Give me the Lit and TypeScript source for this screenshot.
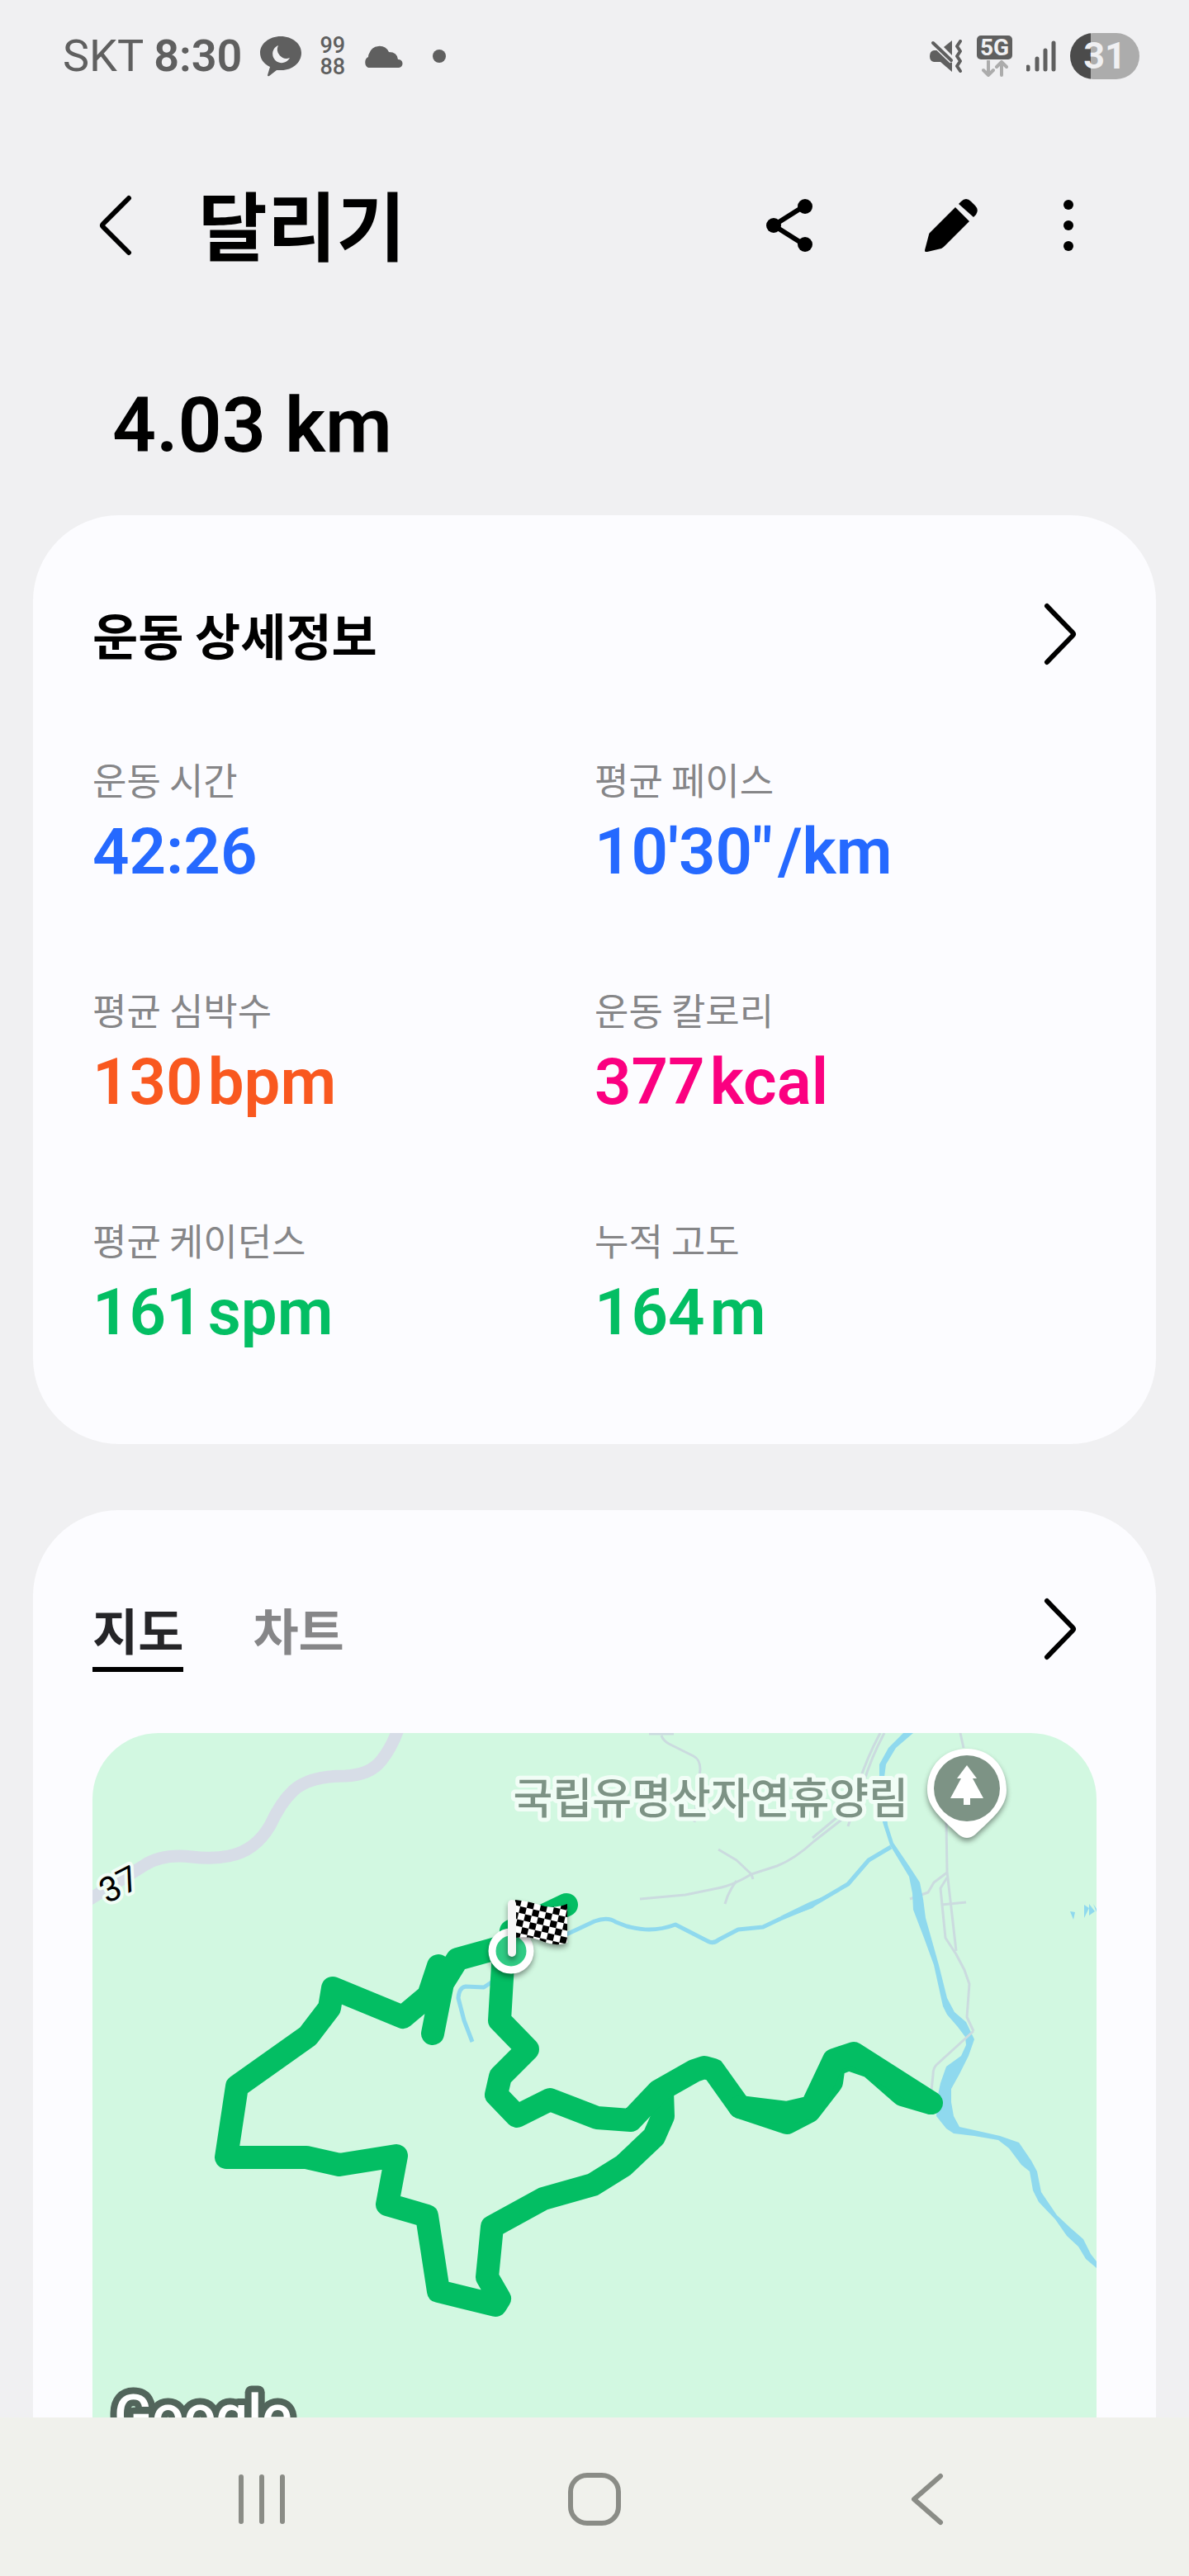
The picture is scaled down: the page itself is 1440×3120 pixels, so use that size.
import { LitElement, html, css, svg } from "lit";
import { customElement, property, state } from "lit/decorators.js";
import { classMap } from "lit/directives/class-map.js";

const chevron = html`
  <svg width="40" height="76" viewBox="0 0 40 76" fill="none" stroke="currentColor" stroke-width="6" stroke-linecap="round" stroke-linejoin="round">
    <path d="M4 4 L35 36 Q37 38 35 40 L4 72" />
  </svg>
`;

@customElement("status-bar")
export class StatusBar extends LitElement {
  static styles = css`
    :host {
      display: flex;
      justify-content: space-between;
      align-items: center;
      height: 136px;
      padding: 0 60px 0 76px;
      color: #5f5f5f;
      font-family: Roboto, "Noto Sans CJK KR", sans-serif;
      font-size: 54px;
      line-height: 64px;
    }
    .side {
      display: flex;
      align-items: center;
      gap: 22px;
    }
    .system {
      gap: 17px;
    }
    .clock {
      display: flex;
      gap: 12px;
    }
    .time {
      font-weight: 600;
    }
    .badge {
      display: flex;
      flex-direction: column;
      font-size: 27px;
      font-weight: 500;
      line-height: 26px;
    }
    .net {
      display: flex;
      flex-direction: column;
      align-items: center;
      gap: 1px;
    }
    .net-name {
      width: 43px;
      border-radius: 5px;
      background: #5f5f5f;
      color: #f0f0f2;
      font-size: 28px;
      font-weight: 700;
      line-height: 29px;
      text-align: center;
    }
    .battery {
      width: 84px;
      border-radius: 28px;
      background: linear-gradient(to right, #4b4b4b 30%, #acacac 30%);
      color: #f0f0f2;
      font-size: 45px;
      font-weight: 700;
      line-height: 56px;
      text-align: center;
    }
    svg {
      display: block;
    }
  `;

  render() {
    return html`
      <div class="side">
        <div class="clock"><span>SKT</span><span class="time">8:30</span></div>
        <svg width="50" height="50" viewBox="0 0 50 50" fill="currentColor">
          <path fill-rule="evenodd" d="M25 1 C39 1 50 10 50 21 C50 33 39 42 26 42 L20 42 L11 49 Q9 50 9 48 L12 38 C4 34 0 28 0 21 C0 10 11 1 25 1 Z M22 12 A11 11 0 1 0 36 27 A11 11 0 0 1 22 12 Z" />
        </svg>
        <div class="badge"><span>99</span><span>88</span></div>
        <svg width="48" height="28" viewBox="0 0 48 28" fill="currentColor">
          <path d="M6 28 A6 7 0 0 1 6 15 Q6 12 7 11 A13 13 0 0 1 31 9 Q41 9 42 18 A5 5 0 0 1 43 28 Z" />
        </svg>
        <svg width="48" height="16" viewBox="0 0 48 16" fill="currentColor">
          <circle cx="22" cy="8" r="8" />
        </svg>
      </div>
      <div class="side system">
        <svg width="40" height="40" viewBox="0 0 40 40" fill="currentColor">
          <path d="M27 1 V19 L17 9 Z" />
          <path d="M5 13 H11 L27 28 V39 L13 27 H5 Q0 26 0 20 Q0 14 5 13 Z" />
          <path d="M3 3 L27 26" stroke="#f0f0f2" stroke-width="7" />
          <path d="M4 4 L26 25" stroke="currentColor" stroke-width="4" stroke-linecap="round" />
          <path d="M37 2 L33 8 L37 14 L33 20 L37 26 L33 32 L37 38" fill="none" stroke="currentColor" stroke-width="4" stroke-linecap="round" stroke-linejoin="round" />
        </svg>
        <div class="net">
          <span class="net-name">5G</span>
          <svg width="32" height="20" viewBox="0 0 32 20" fill="none" stroke="#acacac" stroke-width="4" stroke-linecap="round">
            <path d="M8 1 V17 M2 12 L8 18 L14 12 M24 18 V2 M18 8 L24 2 L30 8" />
          </svg>
        </div>
        <svg width="36" height="40" viewBox="0 0 36 40" stroke="currentColor" stroke-width="5" stroke-linecap="round">
          <path d="M2 33 V36 M13 23 V36 M23 13 V36 M33 4 V36" />
        </svg>
        <div class="battery">31</div>
      </div>
    `;
  }
}

@customElement("stat-item")
export class StatItem extends LitElement {
  static styles = css`
    :host {
      display: block;
    }
    .label {
      font-family: "Noto Sans CJK KR", sans-serif;
      font-size: 45px;
      line-height: 64px;
      color: #868688;
    }
    .value {
      margin-top: 12px;
      font-family: Roboto, sans-serif;
      font-size: 78px;
      font-weight: 600;
      line-height: 88px;
      white-space: nowrap;
    }
    .unit {
      margin-left: 6px;
    }
    .blue {
      color: #2569ff;
    }
    .orange {
      color: #f9581f;
    }
    .pink {
      color: #fb0080;
    }
    .green {
      color: #03be63;
    }
  `;

  @property() label = "";
  @property() value = "";
  @property() unit = "";
  @property() tone = "blue";

  render() {
    return html`
      <div class="label">${this.label}</div>
      <div class="value ${this.tone}">${this.value}${this.unit ? html`<span class="unit">${this.unit}</span>` : ""}</div>
    `;
  }
}

@customElement("route-map")
export class RouteMap extends LitElement {
  static styles = css`
    :host {
      display: block;
      overflow: hidden;
      border-radius: 80px 80px 0 0;
      background: #d2f8e1;
    }
    svg {
      display: block;
      width: 100%;
      height: auto;
    }
    .highway {
      stroke: #d7dde7;
      stroke-width: 15;
    }
    .road {
      stroke: #cbdbdf;
      stroke-width: 3;
    }
    .water {
      fill: #8fd9ee;
    }
    .stream {
      stroke: #8fd9ee;
      stroke-width: 5;
    }
    .route {
      stroke: #03be63;
      stroke-width: 28;
      stroke-linecap: round;
    }
    .place {
      font-family: "Noto Sans CJK KR", sans-serif;
      font-size: 52px;
      font-weight: 500;
      fill: #7d9385;
      stroke: #f1fdf6;
      stroke-width: 10;
      paint-order: stroke;
    }
    .road-no {
      font-family: Roboto, sans-serif;
      font-size: 42px;
      fill: #000;
      stroke: #f1fdf6;
      stroke-width: 8;
      paint-order: stroke;
    }
    .google {
      font-family: Roboto, sans-serif;
      font-size: 68px;
      font-weight: 500;
      fill: #fff;
      stroke: #52655b;
      stroke-width: 16;
      paint-order: stroke;
    }
    .shadow {
      filter: drop-shadow(0 4px 3px rgba(0, 0, 0, 0.4));
    }
  `;

  roads() {
    return svg`
      <path class="highway" d="M370 -4 Q362 18 350 33 Q336 51 306 52 Q262 52 243 70 Q228 84 215 112 Q197 143 165 149 Q145 153 120 150 Q85 146 63 160 L-6 203" />
      <g class="road">
        <path d="M674 1 H704 M689 3 Q691 9 698 13 L728 28 Q736 32 736 44 L729 108" />
        <path d="M954 0 Q938 30 929 58 L902 102 L872 127" />
        <path d="M959 0 Q943 30 934 60 L906 106 L874 131 Q850 153 829 161 L798 171 Q775 185 757 188 L718 196 L663 201" />
        <path d="M758 141 L780 154 L798 171 L800 177 M780 179 Q770 192 766 207 M915 113 L918 104" />
        <path d="M1051 0 L1055 18 M1034 108 L1035 168 L1041 220 L1046 264" />
        <path d="M1035 169 L1019 181 L1012 193 L990 201" />
        <path d="M1035 175 L1027 188 L1033 248 L1046 268 L1056 287 L1062 304 L1059 344 L1067 361" />
        <path d="M1028 208 L1058 205" />
      </g>
    `;
  }

  water() {
    return svg`
      <path class="water" d="M982 0 L964 18 L953 38 L953 61 L957 108 L966 136 L989 174 L993 194 L994 214 L1007 248 L1019 281 L1030 331 L1035 341 L1048 356 L1057 368 L1058 378 L1052 391 L1034 404 L1027 424 L1024 438 L1022 464 L1034 479 L1043 485 L1068 488 L1097 493 L1110 503 L1125 523 L1135 531 L1139 554 L1146 568 L1166 589 L1180 609 L1194 622 L1203 637 L1216 648 V640 L1209 631 L1200 613 L1184 599 L1168 584 L1149 556 L1144 531 L1137 518 L1122 496 L1099 488 L1077 483 L1050 477 L1043 464 L1040 447 V431 L1050 413 L1061 391 L1068 371 L1058 350 L1044 338 L1035 321 L1025 281 L1009 224 L1006 201 L1002 181 L989 161 L970 133 L963 111 L958 61 L961 38 L973 18 L994 0 Z" />
      <path class="stream" d="M560 250 L576 243 L608 228 Q624 222 634 229 L647 234 Q664 238 674 238 Q690 238 706 232 L745 252 Q752 256 759 250 L782 238 L812 235 L833 225 L869 210 L915 183 L940 154 L967 138" />
      <path class="water" d="M833 222 L868 205 L888 197 L872 212 L850 220 Z" />
      <path class="stream" d="M486 300 L474 308 L452 307 Q444 308 443 321 L450 348 L460 374" />
      <path class="water" d="M1184 216 L1190 217 L1188 226 Z M1201 208 L1207 212 L1201 224 Z M1207 207 L1214 216 L1207 221 Z M1212 207 L1216 213 V217 Z" />
      <path class="road" d="M1067 361 L1022 402 Q1018 406 1018 414 L1016 433" />
    `;
  }

  route() {
    return svg`
      <g class="route">
        <path d="M574 208 L507 240 M507 256 L442 274 L424 303 L412 364 M419 282 L407 318 L376 344 L291 309 L287 333 L261 367 L175 428 L162 514 H259 L299 523 L368 512 L357 571 L405 585 L419 676 L488 693 L493 685 L478 659 L484 598 L546 564 L606 547 L643 524 L680 489 L691 464 L690 434" />
        <path d="M498 264 L493 348 L527 383 L494 416 L489 438 L514 464 L554 444 L611 466 L652 469 L685 434 L729 409 L741 405 L752 408 L784 453 L841 472 L868 458 L895 423 L898 402 L916 395 L942 404 L981 438 L1015 448" />
        <path d="M784 453 L841 460 L871 453 L898 396 L922 388 L1016 448" />
      </g>
    `;
  }

  markers() {
    return svg`
      <defs>
        <pattern id="checker" width="16" height="16" patternUnits="userSpaceOnUse" patternTransform="rotate(13)">
          <rect width="16" height="16" fill="#fff" />
          <path d="M0 0 H8 V8 H0 Z M8 8 H16 V16 H8 Z" fill="#000" />
        </pattern>
      </defs>
      <g class="shadow">
        <circle cx="507" cy="264" r="23" fill="#30cb84" stroke="#fff" stroke-width="9" />
      </g>
      <g class="shadow">
        <path d="M512 202 Q530 204 541 208 Q556 214 575 207 V254 Q562 259 547 253 Q530 245 512 248 Z" fill="url(#checker)" />
        <rect x="503" y="202" width="10" height="69" rx="5" fill="#f6f6f6" />
      </g>
      <g class="shadow">
        <path d="M1059 19 C1087 19 1107 40 1107 69 C1107 90 1090 103 1069 123 Q1059 131 1049 123 C1028 103 1011 90 1011 69 C1011 40 1031 19 1059 19 Z" fill="#fff" />
      </g>
      <circle cx="1059" cy="67" r="40" fill="#7d9385" />
      <path d="M1059 39 L1071 55 H1066 L1079 79 H1063 V87 H1055 V79 H1039 L1052 55 H1047 Z" fill="#fff" />
    `;
  }

  render() {
    return html`
      <svg viewBox="0 0 1216 829" fill="none" stroke-linejoin="round">
        ${this.roads()} ${this.water()}
        <text class="place" x="988" y="98" text-anchor="end">국립유명산자연휴양림</text>
        <text class="road-no" x="32" y="198" text-anchor="middle" transform="rotate(-27 32 183)">37</text>
        ${this.route()} ${this.markers()}
        <text class="google" x="26" y="850">Google</text>
      </svg>
    `;
  }
}

@customElement("app-root")
export class AppRoot extends LitElement {
  static styles = css`
    :host {
      display: flex;
      flex-direction: column;
      min-height: 100vh;
      background: #f0f0f2;
      color: #000;
      font-family: "Noto Sans CJK KR", sans-serif;
    }
    h1,
    h2 {
      margin: 0;
      font-weight: 700;
    }
    button {
      display: flex;
      justify-content: center;
      align-items: center;
      padding: 0;
      border: 0;
      background: none;
      color: inherit;
      font: inherit;
      cursor: pointer;
    }
    svg {
      display: block;
    }
    .toolbar {
      display: flex;
      align-items: center;
      height: 274px;
      padding: 0 102px 0 80px;
    }
    .back {
      width: 120px;
      height: 120px;
    }
    .title {
      flex: 1;
      margin-left: 40px;
      padding-bottom: 8px;
      font-size: 91px;
      line-height: 120px;
    }
    .action {
      width: 196px;
      height: 120px;
    }
    .more {
      width: 88px;
    }
    .distance {
      padding: 52px 136px 54px;
      font-family: Roboto, sans-serif;
      font-size: 93px;
      font-weight: 600;
      line-height: 108px;
    }
    .card {
      margin: 0 40px;
      padding: 102px 72px 115px;
      border-radius: 104px;
      background: #fcfcff;
    }
    .card-map {
      flex: 1;
      margin-top: 80px;
      padding-bottom: 0;
      border-radius: 104px 104px 0 0;
    }
    .card-head {
      display: flex;
      justify-content: space-between;
      font-size: 60px;
      font-weight: 700;
      line-height: 84px;
    }
    .card-title {
      font-size: 60px;
    }
    .open {
      width: 88px;
      height: 84px;
    }
    .stats {
      display: grid;
      grid-template-columns: 1fr 1fr;
      row-gap: 115px;
      margin-top: 102px;
    }
    .tabs {
      display: flex;
      gap: 84px;
    }
    .tab {
      padding-bottom: 4px;
      border-bottom: 6px solid transparent;
      color: #868688;
    }
    .tab.active {
      border-color: #000;
      color: #252528;
    }
    .map {
      margin-top: 74px;
    }
    .nav {
      display: flex;
      height: 192px;
      padding: 6px 8% 0;
      box-sizing: border-box;
      background: #f0f1ec;
      color: #8a8c86;
    }
    .nav button {
      flex: 1;
    }
  `;

  @state() tab = "지도";

  stats = [
    { label: "운동 시간", value: "42:26", unit: "", tone: "blue" },
    { label: "평균 페이스", value: "10'30\"", unit: "/km", tone: "blue" },
    { label: "평균 심박수", value: "130", unit: "bpm", tone: "orange" },
    { label: "운동 칼로리", value: "377", unit: "kcal", tone: "pink" },
    { label: "평균 케이던스", value: "161", unit: "spm", tone: "green" },
    { label: "누적 고도", value: "164", unit: "m", tone: "green" },
  ];

  render() {
    return html`
      <status-bar></status-bar>
      <header class="toolbar">
        <button class="back" aria-label="뒤로">
          <svg width="40" height="76" viewBox="0 0 40 76" fill="none" stroke="currentColor" stroke-width="6" stroke-linecap="round" stroke-linejoin="round">
            <path d="M36 5 L5 36 Q3 38 5 40 L36 71" />
          </svg>
        </button>
        <h1 class="title">달리기</h1>
        <button class="action" aria-label="공유">
          <svg width="58" height="66" viewBox="0 0 58 66" fill="currentColor">
            <path d="M48 9 L10 33 L48 57" fill="none" stroke="currentColor" stroke-width="6" />
            <circle cx="10" cy="33" r="9" />
            <circle cx="48" cy="10" r="9" />
            <circle cx="48" cy="56" r="9" />
          </svg>
        </button>
        <button class="action" aria-label="편집">
          <svg width="64" height="64" viewBox="0 0 64 64" fill="currentColor">
            <path d="M37 10 L54 27 L24 57 Q22 59 20 60 L3 64 Q0 65 0 62 L5 43 Q5 42 6 41 Z" />
            <path d="M41 6 L44 3 Q50 -3 56 3 L61 8 Q66 13 62 19 L59 22 Z" />
          </svg>
        </button>
        <button class="action more" aria-label="더보기">
          <svg width="12" height="64" viewBox="0 0 12 64" fill="currentColor">
            <circle cx="6" cy="7" r="6" />
            <circle cx="6" cy="32" r="6" />
            <circle cx="6" cy="57" r="6" />
          </svg>
        </button>
      </header>

      <div class="distance">4.03 km</div>

      <section class="card">
        <div class="card-head">
          <h2 class="card-title">운동 상세정보</h2>
          <button class="open" aria-label="운동 상세정보 열기">${chevron}</button>
        </div>
        <div class="stats">
          ${this.stats.map(
            (s) => html`<stat-item label=${s.label} value=${s.value} unit=${s.unit} tone=${s.tone}></stat-item>`
          )}
        </div>
      </section>

      <section class="card card-map">
        <div class="card-head">
          <div class="tabs">
            ${["지도", "차트"].map(
              (name) => html`
                <button class=${classMap({ tab: true, active: name === this.tab })} @click=${() => (this.tab = name)}>${name}</button>
              `
            )}
          </div>
          <button class="open" aria-label="지도 열기">${chevron}</button>
        </div>
        <route-map class="map"></route-map>
      </section>

      <nav class="nav">
        <button aria-label="최근 앱">
          <svg width="58" height="64" viewBox="0 0 58 64" stroke="currentColor" stroke-width="6" stroke-linecap="round">
            <path d="M4 5 V59 M29 5 V59 M54 5 V59" />
          </svg>
        </button>
        <button aria-label="홈">
          <svg width="64" height="64" viewBox="0 0 64 64" fill="none" stroke="currentColor" stroke-width="6">
            <rect x="3" y="3" width="58" height="58" rx="20" />
          </svg>
        </button>
        <button aria-label="이전">
          <svg width="40" height="64" viewBox="0 0 40 64" fill="none" stroke="currentColor" stroke-width="6" stroke-linecap="round" stroke-linejoin="round">
            <path d="M36 4 L4 32 L36 60" />
          </svg>
        </button>
      </nav>
    `;
  }
}
